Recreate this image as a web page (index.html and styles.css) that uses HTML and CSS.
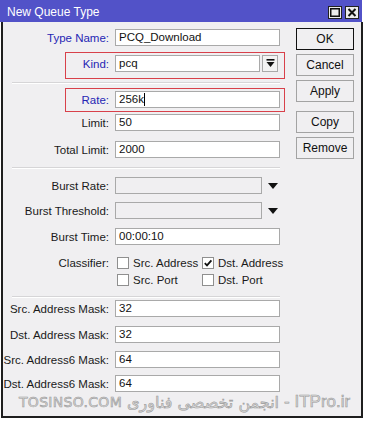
FILE: index.html
```html
<!DOCTYPE html>
<html lang="en">
<head>
    <meta charset="UTF-8">
    <title>New Queue Type</title>
    <link rel="stylesheet" href="styles.css">
</head>
<body>
    <div class="window">
        <div class="titlebar">
            <span class="title">New Queue Type</span>
            <div class="tb-btns">
                <span class="tb-btn"><svg width="10" height="9" viewBox="0 0 10 9"><rect x="0.75" y="0.75" width="8.5" height="7.5" fill="none" stroke="#111" stroke-width="1.5"/></svg></span>
                <span class="tb-btn"><svg width="10" height="9" viewBox="0 0 10 9"><path d="M1.5 1 L8.5 8 M8.5 1 L1.5 8" stroke="#111" stroke-width="2"/></svg></span>
            </div>
        </div>

        <div class="content">
            <div class="main">
                <div class="form">
                    <div class="row r-name">
                        <span class="lbl blue">Type Name:</span>
                        <div class="field">PCQ_Download</div>
                    </div>

                    <div class="hl hl-kind">
                        <div class="row">
                            <span class="lbl blue">Kind:</span>
                            <div class="field f-kind">pcq</div>
                            <span class="dd-btn"><svg width="9" height="9" viewBox="0 0 9 9"><rect x="0.5" y="0" width="8" height="1.6" fill="#111"/><path d="M0.5 3 H8.5 L4.5 8 Z" fill="#111"/></svg></span>
                        </div>
                    </div>

                    <div class="sep s-1"></div>

                    <div class="hl hl-rate">
                        <div class="row">
                            <span class="lbl blue">Rate:</span>
                            <div class="field">256k<span class="caret"></span></div>
                        </div>
                    </div>

                    <div class="row r-limit">
                        <span class="lbl">Limit:</span>
                        <div class="field">50</div>
                    </div>
                    <div class="row r-total">
                        <span class="lbl">Total Limit:</span>
                        <div class="field">2000</div>
                    </div>

                    <div class="sep s-2"></div>

                    <div class="row r-burst">
                        <span class="lbl">Burst Rate:</span>
                        <div class="field f-off"></div>
                        <span class="arrow"></span>
                    </div>
                    <div class="row r-thresh">
                        <span class="lbl">Burst Threshold:</span>
                        <div class="field f-off"></div>
                        <span class="arrow"></span>
                    </div>
                    <div class="row r-time">
                        <span class="lbl">Burst Time:</span>
                        <div class="field">00:00:10</div>
                    </div>

                    <div class="row r-cls1">
                        <span class="lbl">Classifier:</span>
                        <div class="checks">
                            <span class="chk"><span class="box"></span>Src. Address</span>
                            <span class="chk"><span class="box"><svg width="10" height="10" viewBox="0 0 10 10"><path d="M1.8 5.2 L4 7.4 L8.4 2.4" fill="none" stroke="#111" stroke-width="1.8"/></svg></span>Dst. Address</span>
                        </div>
                    </div>
                    <div class="row r-cls2">
                        <span class="lbl"></span>
                        <div class="checks">
                            <span class="chk"><span class="box"></span>Src. Port</span>
                            <span class="chk"><span class="box"></span>Dst. Port</span>
                        </div>
                    </div>

                    <div class="sep s-3"></div>

                    <div class="row r-mask1">
                        <span class="lbl">Src. Address Mask:</span>
                        <div class="field">32</div>
                    </div>
                    <div class="row r-mask2">
                        <span class="lbl">Dst. Address Mask:</span>
                        <div class="field">32</div>
                    </div>
                    <div class="row r-mask3">
                        <span class="lbl">Src. Address6 Mask:</span>
                        <div class="field">64</div>
                    </div>
                    <div class="row r-mask4">
                        <span class="lbl">Dst. Address6 Mask:</span>
                        <div class="field">64</div>
                    </div>
                </div>

                <div class="buttons">
                    <button class="btn btn-default">OK</button>
                    <button class="btn">Cancel</button>
                    <button class="btn">Apply</button>
                    <button class="btn btn-copy">Copy</button>
                    <button class="btn">Remove</button>
                </div>
            </div>

            <div class="watermark">
                <span class="wm-site">TOSINSO.COM</span>
                <span class="wm-fa" dir="rtl">انجمن تخصصی فناوری</span>
                <span class="wm-en">- ITPro.ir</span>
            </div>
        </div>
    </div>
</body>
</html>
```

FILE: styles.css
```css
body {
    margin: 0;
    background-color: #fff;
    font-family: "Liberation Sans", Arial, sans-serif;
    font-size: 11.5px;
    color: #1a1a1a;
}
.window {
    width: 363px;
}
.titlebar {
    width: 362px;
    height: 22px;
    box-sizing: border-box;
    padding: 0 3px 0 7px;
    display: flex;
    align-items: center;
    justify-content: space-between;
    background-color: #5252c8;
    color: #fff;
}
.title {
    font-size: 12px;
    padding-top: 1px;
}
.tb-btns {
    display: flex;
    gap: 3px;
    padding-top: 2px;
}
.tb-btn {
    width: 14px;
    height: 13px;
    box-sizing: border-box;
    border: 1px solid #222;
    background-color: #ececec;
    display: flex;
    align-items: center;
    justify-content: center;
}
.content {
    margin-left: 1px;
    width: 362px;
    height: 396px;
    box-sizing: border-box;
    border: 2px solid #1e1e1e;
    border-top: 0;
    padding-top: 7px;
    background-color: #f0eff1;
}
.main {
    display: flex;
}
.form {
    width: 282px;
    display: flex;
    flex-direction: column;
}
.row {
    display: flex;
    align-items: center;
    gap: 6px;
    height: 17px;
}
.lbl {
    width: 106px;
    flex: none;
    text-align: right;
    white-space: nowrap;
}
.blue {
    color: #2626b4;
}
.field {
    width: 165px;
    height: 17px;
    box-sizing: border-box;
    border: 1px solid #a9a9a9;
    background-color: #fff;
    padding-left: 3px;
    line-height: 15px;
    color: #111;
    display: flex;
    align-items: center;
}
.f-off {
    width: 147px;
    background-color: #f0eff1;
}
.f-kind {
    width: 145px;
}
.caret {
    display: inline-block;
    width: 1px;
    height: 13px;
    background-color: #000;
}
.dd-btn {
    width: 16px;
    height: 17px;
    box-sizing: border-box;
    border: 1px solid #a9a9a9;
    background-color: #f3f3f3;
    margin-left: -4px;
    display: flex;
    align-items: center;
    justify-content: center;
}
.arrow {
    width: 0;
    height: 0;
    border-left: 5px solid transparent;
    border-right: 5px solid transparent;
    border-top: 6px solid #111;
}

/* red highlight boxes */
.hl {
    margin-left: 62px;
    width: 220px;
    box-sizing: border-box;
    border: 1px solid #d8404a;
}
.hl .lbl {
    width: 43px;
}
.hl-kind {
    margin-top: 6px;
    padding: 2px 0 6px;
}
.hl-rate {
    margin-top: 4px;
    padding: 2px 0 3px;
}

.sep {
    margin-left: 9px;
    width: 268px;
    height: 1px;
    background-color: #d6d5d7;
    border-bottom: 1px solid #fff;
}
.s-1 { margin-top: 3px; }
.s-2 { margin-top: 9px; }
.s-3 { margin-top: 8px; }

.r-limit { margin-top: 2px; }
.r-total { margin-top: 10px; }
.r-burst { margin-top: 8px; }
.r-thresh { margin-top: 8px; }
.r-time { margin-top: 9px; }
.r-cls1 { margin-top: 9px; }
.r-cls2 { margin-top: 0; }
.r-mask1 { margin-top: 2px; }
.r-mask2 { margin-top: 9px; }
.r-mask3 { margin-top: 8px; }
.r-mask4 { margin-top: 7px; }

.checks {
    display: flex;
    padding-left: 2px;
}
.chk {
    display: flex;
    align-items: center;
    gap: 4px;
    width: 85px;
}
.box {
    width: 12px;
    height: 12px;
    box-sizing: border-box;
    border: 1px solid #8f8f8f;
    background-color: #fff;
    display: flex;
    align-items: center;
    justify-content: center;
}

.buttons {
    margin-left: 11px;
    margin-top: -1px;
    display: flex;
    flex-direction: column;
    gap: 4px;
}
.btn {
    width: 58px;
    height: 22px;
    padding: 0;
    font-family: "Liberation Sans", Arial, sans-serif;
    font-size: 12px;
    color: #111;
    background-color: #f0eff1;
    border: 1px solid #a3a3a3;
}
.btn-default {
    border-color: #111;
}
.btn-copy {
    margin-top: 5px;
}

.watermark {
    margin: 1px 0 0 16px;
    height: 18px;
    display: flex;
    align-items: center;
    gap: 5px;
    color: #dcdcdc;
    -webkit-text-stroke: 0.6px #9a9a9a;
    white-space: nowrap;
}
.wm-site {
    font-family: "DejaVu Sans", sans-serif;
    font-size: 14px;
    letter-spacing: 0.3px;
}
.wm-fa {
    font-family: "DejaVu Sans", sans-serif;
    font-size: 16px;
}
.wm-en {
    font-family: "Liberation Sans", Arial, sans-serif;
    font-size: 17px;
}
```
